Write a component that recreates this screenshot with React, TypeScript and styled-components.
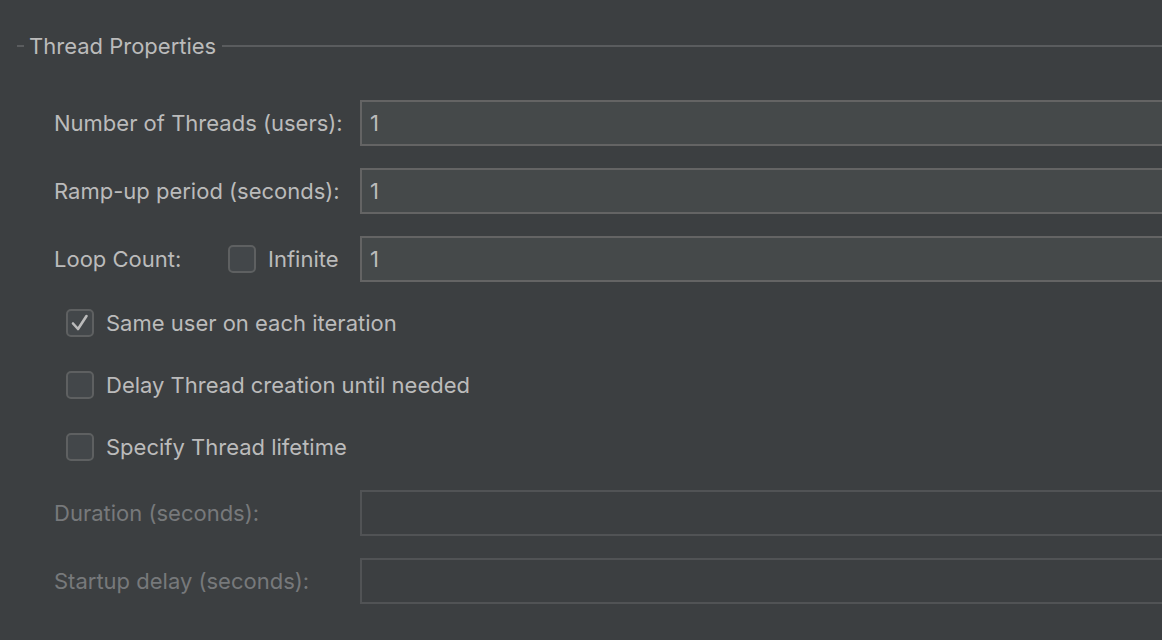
import React from "react";
import styled, { createGlobalStyle } from "styled-components";

const Global = createGlobalStyle`
  html, body {
    margin: 0;
    padding: 0;
    background: #3c3f41;
    overflow: hidden;
  }
  body {
    font-family: Inter, "Liberation Sans", Arial, sans-serif;
    color: #bbbbbb;
  }
`;

const Panel = styled.div`
  width: 1162px;
  height: 640px;
  background: #3c3f41;
  overflow: hidden;
  padding-top: 30px;
  box-sizing: border-box;
`;

const Legend = styled.div`
  display: flex;
  align-items: center;
  height: 32px;
  padding-left: 17px;
  font-size: 22px;
  color: #bbbbbb;

  &::before {
    content: "";
    width: 7px;
    height: 2px;
    background: #5a5c5e;
    margin-right: 5px;
  }
  &::after {
    content: "";
    flex: 1;
    height: 2px;
    background: #5a5c5e;
    margin-left: 6px;
  }
`;

const Form = styled.div`
  display: flex;
  flex-direction: column;
  padding-left: 54px;
  margin-right: -20px;
  margin-top: 38px;
`;

const FieldRow = styled.div<{ $gap?: number }>`
  display: grid;
  grid-template-columns: 306px 1fr;
  align-items: center;
  height: 46px;
  margin-bottom: ${(p) => p.$gap ?? 22}px;
`;

const Label = styled.span<{ $disabled?: boolean }>`
  font-size: 22px;
  color: ${(p) => (p.$disabled ? "#77797b" : "#bbbbbb")};
  white-space: nowrap;
`;

const LoopLabel = styled.div`
  display: flex;
  align-items: center;
`;

const LoopText = styled(Label)`
  width: 174px;
`;

const Input = styled.div<{ $disabled?: boolean }>`
  height: 46px;
  box-sizing: border-box;
  border: 2px solid ${(p) => (p.$disabled ? "#515355" : "#646464")};
  background: ${(p) => (p.$disabled ? "#3c3f41" : "#45494a")};
  font-size: 22px;
  color: #bbbbbb;
  padding-left: 8px;
  display: flex;
  align-items: center;
`;

const Box = styled.span`
  width: 28px;
  height: 28px;
  box-sizing: border-box;
  border: 2px solid #5e6061;
  border-radius: 5px;
  background: #43474a;
  display: inline-flex;
  align-items: center;
  justify-content: center;
  flex-shrink: 0;
`;

const CheckRow = styled.div<{ $gap?: number }>`
  display: flex;
  align-items: center;
  gap: 12px;
  height: 28px;
  margin-left: 12px;
  margin-bottom: ${(p) => p.$gap ?? 34}px;
  font-size: 22px;
  color: #bbbbbb;
`;

const InlineCheck = styled.div`
  display: flex;
  align-items: center;
  gap: 12px;
`;

const Check = () => (
  <svg width="22" height="22" viewBox="0 0 22 22">
    <polyline
      points="4,11.5 9,17 17.5,4"
      fill="none"
      stroke="#bbbbbb"
      strokeWidth="2.6"
      strokeLinecap="round"
      strokeLinejoin="round"
    />
  </svg>
);

function CheckBox({ checked, label, gap }: { checked?: boolean; label: string; gap?: number }) {
  return (
    <CheckRow $gap={gap}>
      <Box>{checked && <Check />}</Box>
      <span>{label}</span>
    </CheckRow>
  );
}

export default function App() {
  return (
    <Panel>
      <Global />
      <Legend>Thread Properties</Legend>
      <Form>
        <FieldRow>
          <Label>Number of Threads (users):</Label>
          <Input>1</Input>
        </FieldRow>
        <FieldRow>
          <Label>Ramp-up period (seconds):</Label>
          <Input>1</Input>
        </FieldRow>
        <FieldRow $gap={27}>
          <LoopLabel>
            <LoopText>Loop Count:</LoopText>
            <InlineCheck>
              <Box />
              <Label>Infinite</Label>
            </InlineCheck>
          </LoopLabel>
          <Input>1</Input>
        </FieldRow>
        <CheckBox checked label="Same user on each iteration" />
        <CheckBox label="Delay Thread creation until needed" />
        <CheckBox label="Specify Thread lifetime" gap={29} />
        <FieldRow>
          <Label $disabled>Duration (seconds):</Label>
          <Input $disabled />
        </FieldRow>
        <FieldRow>
          <Label $disabled>Startup delay (seconds):</Label>
          <Input $disabled />
        </FieldRow>
      </Form>
    </Panel>
  );
}
